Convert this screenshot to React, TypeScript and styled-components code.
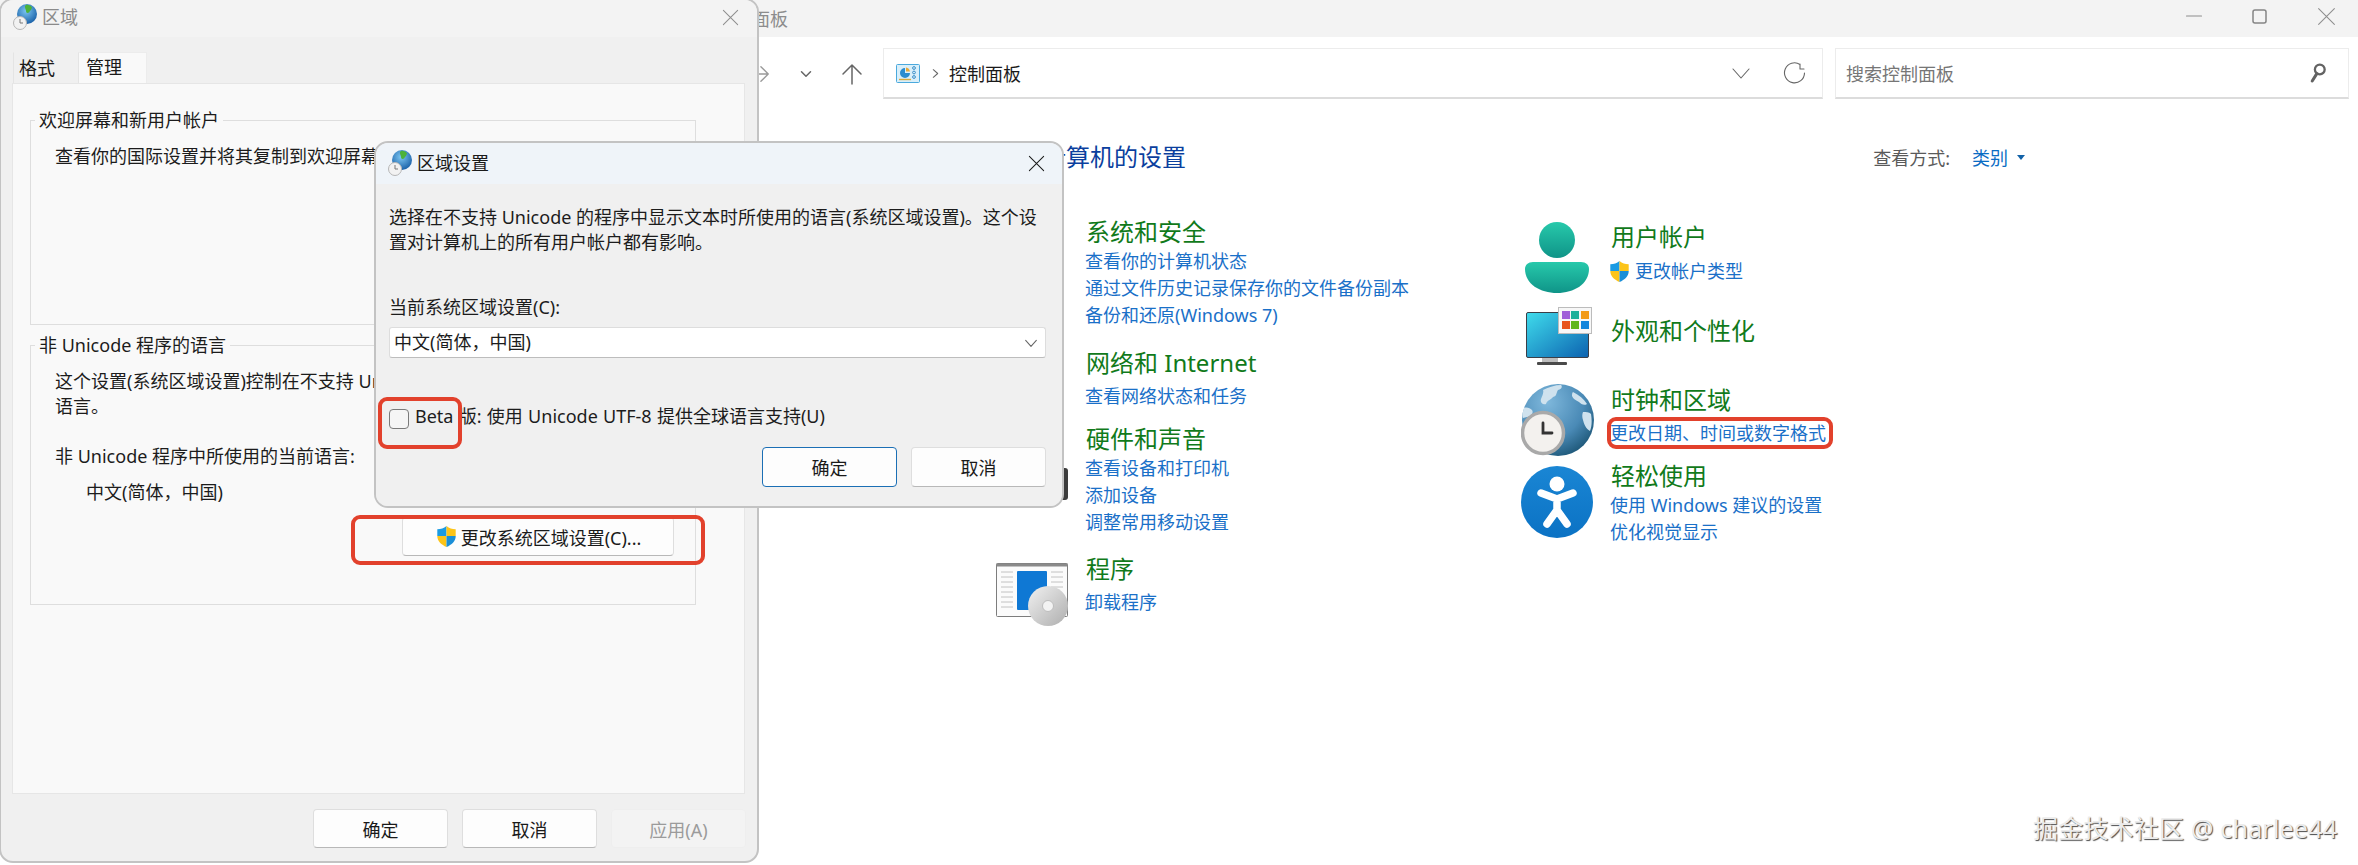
import React from "react";
import styled, { createGlobalStyle } from "styled-components";

const Global = createGlobalStyle`
  html, body { margin: 0; padding: 0; width: 2358px; height: 865px; overflow: hidden; background: #fff; }
  body { font-family: "Noto Sans", "Noto Sans CJK SC", sans-serif; font-size: 18px; color: #1c1c1c; }
  * { box-sizing: border-box; }
`;

const Desktop = styled.div`
  position: relative;
  width: 2358px;
  height: 865px;
  overflow: hidden;
  background: #fff;
`;

/* ---------- main control panel window ---------- */
const MainWindow = styled.section`
  position: absolute;
  left: 0;
  top: 0;
  width: 2358px;
  height: 865px;
  background: #fff;
`;
const MainTitleBar = styled.header`
  height: 37px;
  background: #f3f3f3;
  display: flex;
  align-items: center;
  padding-left: 716px;
  color: #8c8c8c;
  line-height: 34px;
`;
const MainTitleText = styled.span`
  flex: 1;
`;
const WindowControls = styled.div`
  display: flex;
  align-items: center;
  gap: 49px;
  padding: 0 21px 5px 0;
`;
const Toolbar = styled.div`
  display: flex;
  align-items: center;
  padding: 11px 0 0 745px;
  gap: 16px;
`;
const NavButton = styled.span`
  width: 30px;
  height: 51px;
  display: flex;
  align-items: center;
  justify-content: center;
`;
const Field = styled.div<{ $w: number }>`
  width: ${(p) => p.$w}px;
  height: 51px;
  background: #fff;
  border: 1px solid #ececec;
  border-bottom: 2px solid #dcdcdc;
  display: flex;
  align-items: center;
`;
const Address = styled(Field)`
  padding: 0 15px 0 12px;
`;
const Crumb = styled.span`
  color: #1a1a1a;
  margin-left: 7px;
  flex: 1;
`;
const CrumbSep = styled.span`
  margin-left: 9px;
  display: inline-flex;
`;
const AddressActions = styled.div`
  display: flex;
  align-items: center;
  gap: 30px;
`;
const SearchField = styled(Field)`
  margin-left: -4px;
  padding: 0 22px 0 10px;
  justify-content: space-between;
  color: #767676;
`;

const Content = styled.main`
  padding: 42px 0 0 994px;
`;
const HeadingRow = styled.div`
  width: 1031px;
  display: flex;
  justify-content: space-between;
  align-items: center;
  height: 32px;
`;
const Heading = styled.h1`
  margin: 0;
  font-weight: 400;
  font-size: 24px;
  line-height: 32px;
  color: #0b3f9e;
`;
const ViewBy = styled.div`
  display: flex;
  align-items: center;
  color: #5a5a5a;
`;
const ViewValue = styled.span`
  color: #0a6cc4;
  margin-left: 22px;
`;
const ViewCaret = styled.span`
  width: 0;
  height: 0;
  margin-left: 9px;
  border-left: 4px solid transparent;
  border-right: 4px solid transparent;
  border-top: 5px solid #1262a8;
`;
const Columns = styled.div`
  display: grid;
  grid-template-columns: 525px 600px;
  padding: 43px 0 0 2px;
`;
const Column = styled.div`
  display: flex;
  flex-direction: column;
`;
const Category = styled.article<{ $top: number }>`
  display: flex;
  gap: 18px;
  margin-top: ${(p) => p.$top}px;
`;
const IconSlot = styled.div<{ $top: number }>`
  width: 72px;
  flex: none;
  height: 0;
  margin-top: ${(p) => p.$top}px;
  svg { display: block; }
`;
const CategoryBody = styled.div`
  display: flex;
  flex-direction: column;
`;
const CategoryTitle = styled.h2<{ $after: number }>`
  margin: 0 0 ${(p) => p.$after}px;
  font-size: 24px;
  font-weight: 400;
  line-height: 32px;
  color: #117a1b;
  white-space: nowrap;
`;
const TaskLink = styled.a`
  display: flex;
  align-items: center;
  gap: 4px;
  height: 27px;
  line-height: 27px;
  color: #1a70c8;
  white-space: nowrap;
  margin-left: -1px;
`;
const ShieldLink = styled(TaskLink)`
  margin-left: -3px;
`;

/* ---------- dialogs ---------- */
const Dialog = styled.section`
  position: absolute;
  display: flex;
  flex-direction: column;
  background: #f0f0f0;
  border: 2px solid #c3c3c3;
  border-radius: 14px;
  overflow: hidden;
`;
const RegionDialog = styled(Dialog)`
  left: -1px;
  top: -2px;
  width: 760px;
  height: 865px;
`;
const SettingsDialog = styled(Dialog)`
  left: 374px;
  top: 141px;
  width: 690px;
  height: 367px;
`;
const DialogTitle = styled.header<{ $active?: boolean }>`
  flex: none;
  display: flex;
  align-items: center;
  justify-content: space-between;
  background: ${(p) => (p.$active ? "#eff4f9" : "#f3f3f3")};
  color: ${(p) => (p.$active ? "#1a1a1a" : "#8a8a8a")};
`;
const RegionTitle = styled(DialogTitle)`
  height: 37px;
  padding: 0 17px 3px 12px;
`;
const SettingsTitle = styled(DialogTitle)`
  height: 41px;
  padding: 0 16px 1px 12px;
`;
const TitleLabel = styled.div`
  display: flex;
  align-items: center;
  gap: 5px;
  line-height: 34px;
`;
const Tabs = styled.nav`
  display: flex;
  padding: 15px 0 0 12px;
  height: 46px;
`;
const Tab = styled.span<{ $active?: boolean }>`
  width: ${(p) => (p.$active ? 69 : 65)}px;
  padding-left: ${(p) => (p.$active ? 7 : 5)}px;
  line-height: ${(p) => (p.$active ? 28 : 31)}px;
  background: ${(p) => (p.$active ? "#f9f9f9" : "#f0f0f0")};
  color: #1a1a1a;
  border-top: 1px solid ${(p) => (p.$active ? "#ececec" : "transparent")};
  border-left: 1px solid #e4e4e4;
  border-right: 1px solid ${(p) => (p.$active ? "#ececec" : "transparent")};
`;
const TabPanel = styled.div`
  margin: 0 12px 0 11px;
  height: 711px;
  background: #f9f9f9;
  border: 1px solid #e6e6e6;
  padding: 24px 0 0 17px;
  display: flex;
  flex-direction: column;
  gap: 8px;
`;
const Group = styled.fieldset<{ $h: number }>`
  margin: 0;
  width: 666px;
  height: ${(p) => p.$h}px;
  min-width: 0;
  border: 1px solid #dedede;
  padding: 0 20px 0 24px;
  display: flex;
  flex-direction: column;
  color: #1c1c1c;
`;
const Legend = styled.legend`
  margin-left: -20px;
  padding: 0 4px;
  line-height: 24px;
`;
const GroupText = styled.p<{ $top: number; $indent?: number }>`
  margin: ${(p) => p.$top}px 0 0 ${(p) => p.$indent || 0}px;
  line-height: 25px;
`;
const Button = styled.button<{ $primary?: boolean; $disabled?: boolean }>`
  font: inherit;
  color: ${(p) => (p.$disabled ? "#9b9b9b" : "#1a1a1a")};
  background: ${(p) => (p.$disabled ? "#f3f3f3" : "#fdfdfd")};
  border: 1px solid ${(p) => (p.$primary ? "#1b6fb5" : p.$disabled ? "#eeeeee" : "#dedede")};
  border-bottom-color: ${(p) => (p.$primary ? "#1b6fb5" : p.$disabled ? "#eeeeee" : "#b8b8b8")};
  border-radius: 4px;
  padding: 0;
  display: flex;
  align-items: center;
  justify-content: center;
`;
const ActionButton = styled(Button)`
  width: 135px;
  height: 39px;
`;
const AdminButton = styled(Button)`
  width: 272px;
  height: 39px;
  margin: 12px 0 0 347px;
  gap: 3px;
`;
const DialogFooter = styled.footer`
  display: flex;
  justify-content: flex-end;
  gap: 14px;
  padding: 15px 11px 0 0;
`;
const SettingsBody = styled.div`
  flex: 1;
  padding: 21px 16px 0 13px;
  display: flex;
  flex-direction: column;
  background: #f0f0f0;
`;
const BodyText = styled.p<{ $top?: number }>`
  margin: ${(p) => p.$top || 0}px 0 0;
  line-height: 25px;
  white-space: nowrap;
`;
const SelectBox = styled.div`
  margin-top: 7px;
  height: 31px;
  background: #fff;
  border: 1px solid #dddddd;
  border-bottom-color: #bdbdbd;
  border-radius: 3px;
  display: flex;
  align-items: center;
  justify-content: space-between;
  padding: 0 6px 0 4px;
  line-height: 29px;
`;
const CheckRow = styled.label`
  margin-top: 45px;
  display: flex;
  height: 26px;
  line-height: 26px;
  gap: 6px;
  white-space: nowrap;
  word-spacing: 0.6px;
`;
const CheckBox = styled.span`
  flex: none;
  width: 20px;
  height: 20px;
  margin-top: 6px;
  background: #f5f5f5;
  border: 1px solid #7a7a7a;
  border-radius: 4px;
`;
const SettingsActions = styled.div`
  margin-top: 18px;
  display: flex;
  justify-content: flex-end;
  gap: 14px;
`;
const SettingsButton = styled(Button)`
  width: 135px;
  height: 40px;
`;

/* ---------- annotations ---------- */
const Highlight = styled.div<{ $x: number; $y: number; $w: number; $h: number }>`
  position: absolute;
  left: ${(p) => p.$x}px;
  top: ${(p) => p.$y}px;
  width: ${(p) => p.$w}px;
  height: ${(p) => p.$h}px;
  border: 4px solid #e2412c;
  border-radius: 9px;
`;
const Watermark = styled.div`
  position: absolute;
  left: 2033px;
  top: 811px;
  font-size: 25px;
  line-height: 34px;
  letter-spacing: 0.2px;
  color: #ececec;
  white-space: nowrap;
  text-shadow: 1px 1px 1px #4a4a4a, -1px -1px 0 #fff;
`;

/* ---------- drawings ---------- */
const Glyph = ({ d, size, stroke = "#555", w = 1.5 }: { d: string; size: number; stroke?: string; w?: number }) => (
  <svg width={size} height={size} viewBox="0 0 24 24" fill="none" stroke={stroke} strokeWidth={w} strokeLinecap="round" strokeLinejoin="round">
    <path d={d} />
  </svg>
);
const CLOSE = "M3 3 21 21M21 3 3 21";
const CHEVRON = "M4 8 12 17 20 8";

const ShieldIcon = ({ size }: { size: number }) => (
  <svg width={size} height={size} viewBox="0 0 24 25">
    <path fill="#1a9be3" d="M12 1C9 3.5 6 4.5 2 4.5V12H12Z" />
    <path fill="#fcc419" d="M12 1C15 3.5 18 4.5 22 4.5V12H12Z" />
    <path fill="#fcc419" d="M2 12C2 18 6.5 21.5 12 24V12Z" />
    <path fill="#1a8fd8" d="M22 12C22 18 17.5 21.5 12 24V12Z" />
  </svg>
);

const SmallGlobe = () => (
  <svg width="24" height="26" viewBox="0 0 24 26">
    <defs>
      <radialGradient id="sg" cx="0.45" cy="0.35" r="0.7">
        <stop offset="0" stopColor="#7cc6f2" />
        <stop offset="1" stopColor="#135aa3" />
      </radialGradient>
    </defs>
    <circle cx="14" cy="10" r="10" fill="url(#sg)" />
    <path fill="#4cb23a" d="M13 1c2-.5 5 .5 6 2.5-.5 2.5-2 3-3 5-1.5 1-3 .5-3-1.5s-1.5-3-1-5Z" />
    <circle cx="7" cy="19" r="6.5" fill="#f2f2f2" stroke="#b5b5b5" />
    <path d="M7 15v4h3" stroke="#777" strokeWidth="1" fill="none" />
  </svg>
);

const PanelIcon = () => (
  <svg width="24" height="19" viewBox="0 0 24 19">
    <rect x="0.5" y="0.5" width="23" height="18" rx="1" fill="#d9effa" stroke="#4aa9dd" />
    <path d="M9 4a5 5 0 1 0 5 5H9Z" fill="#2b8ccf" />
    <path d="M10 3.5a5 5 0 0 1 4 4h-4Z" fill="#e8a838" />
    <circle cx="18" cy="4" r="1.4" fill="none" stroke="#3a8fc8" />
    <circle cx="18" cy="8.5" r="1.4" fill="none" stroke="#3a8fc8" />
    <circle cx="18" cy="13" r="1.4" fill="none" stroke="#3a8fc8" />
    <path d="M3 15.5h12" stroke="#d8a93c" strokeWidth="1.4" />
  </svg>
);

const PersonIcon = () => (
  <svg width="72" height="74" viewBox="0 0 72 74">
    <defs>
      <linearGradient id="pg" x1="0" y1="0" x2="0" y2="1">
        <stop offset="0" stopColor="#27c9ab" />
        <stop offset="1" stopColor="#0f9488" />
      </linearGradient>
    </defs>
    <circle cx="36" cy="18" r="18" fill="url(#pg)" />
    <path fill="url(#pg)" d="M12 40h48c5 0 8 3 8 7 0 15-15 24-32 24S4 62 4 47c0-4 3-7 8-7Z" />
  </svg>
);

const MonitorIcon = () => (
  <svg width="72" height="60" viewBox="0 0 72 60">
    <defs>
      <linearGradient id="mg" x1="0" y1="0" x2="1" y2="1">
        <stop offset="0" stopColor="#3fdcec" />
        <stop offset="1" stopColor="#0c62b0" />
      </linearGradient>
    </defs>
    <rect x="21" y="49" width="16" height="7" fill="#bdbdbd" />
    <rect x="16" y="55" width="30" height="3" rx="1" fill="#4a4a4a" />
    <rect x="5.5" y="5.5" width="62" height="45" rx="1.5" fill="url(#mg)" stroke="#3a3f48" />
    <rect x="37.5" y="0.5" width="33" height="26" fill="#f7f7f7" stroke="#bcbcbc" />
    <rect x="41" y="4" width="8" height="8" fill="#a060d8" />
    <rect x="50" y="4" width="8" height="8" fill="#1fb09a" />
    <rect x="60" y="4" width="8" height="8" fill="#f29a18" />
    <rect x="41" y="14" width="8" height="8" fill="#e8541c" />
    <rect x="50" y="14" width="8" height="8" fill="#5fb61c" />
    <rect x="60" y="14" width="8" height="8" fill="#1486dc" />
  </svg>
);

const GlobeIcon = () => (
  <svg width="74" height="74" viewBox="0 0 74 74">
    <defs>
      <radialGradient id="gg" cx="0.35" cy="0.25" r="0.85">
        <stop offset="0" stopColor="#7fb8dc" />
        <stop offset="0.6" stopColor="#4a8ab6" />
        <stop offset="1" stopColor="#17506f" />
      </radialGradient>
    </defs>
    <circle cx="37" cy="36" r="36" fill="url(#gg)" />
    <path fill="#cfe2ee" d="M22 6c6-3 12-5 18-5 2 2 0 4-3 5-2 3-1 6-5 7-2 3-6 3-7 7-4 1-6-2-5-5 1-3 3-6 2-9Zm30 2c6 3 11 7 14 12-3 2-6 0-8-2-3-2-6-3-7-6 0-2 0-3 1-4ZM62 28c3 0 6 0 8 2 1 6 1 12-1 17-4-2-6-7-7-11-1-3-1-6 0-8ZM3 24c3-1 6 0 8 2 2 3-1 6-5 7l-4 1c-1-3 0-7 1-10Z" />
    <circle cx="22" cy="49" r="20.5" fill="#f3f1ee" stroke="#a9a9a9" strokeWidth="3.5" />
    <path d="M22 39v10h9" fill="none" stroke="#333" strokeWidth="2.8" strokeLinecap="round" />
  </svg>
);

const EaseIcon = () => (
  <svg width="72" height="72" viewBox="0 0 72 72">
    <defs>
      <linearGradient id="eg" x1="0" y1="0" x2="0" y2="1">
        <stop offset="0" stopColor="#1a86d4" />
        <stop offset="1" stopColor="#0b72c4" />
      </linearGradient>
    </defs>
    <circle cx="36" cy="36" r="36" fill="url(#eg)" />
    <circle cx="36" cy="18" r="7.5" fill="#fff" />
    <path d="M20 27 36 33 52 27M36 33V44M36 44 26 58M36 44 46 58" stroke="#fff" strokeWidth="7.5" fill="none" strokeLinecap="round" strokeLinejoin="round" />
  </svg>
);

const ProgramIcon = () => (
  <svg width="72" height="68" viewBox="0 0 72 68">
    <defs>
      <linearGradient id="dg" x1="0" y1="0" x2="1" y2="1">
        <stop offset="0" stopColor="#f1f1f1" />
        <stop offset="1" stopColor="#aeaeae" />
      </linearGradient>
    </defs>
    <rect x="0.5" y="0.5" width="71" height="53" rx="1" fill="#fbfbfb" stroke="#7d7d7d" />
    <rect x="0.5" y="0.5" width="71" height="3" fill="#8a8a8a" />
    <path d="M5 9h12M5 14h12M5 19h12M5 24h12M5 29h12M5 34h12M5 39h12M5 44h12M55 9h12M55 14h12M55 19h12M55 24h12" stroke="#c2c2c2" />
    <rect x="21" y="8" width="30" height="39" rx="1" fill="#0f78d4" />
    <circle cx="52" cy="43" r="20" fill="url(#dg)" />
    <circle cx="52" cy="43" r="5.5" fill="#f3f3f3" stroke="#bdbdbd" />
  </svg>
);

const DeviceStub = () => (
  <svg width="72" height="32" viewBox="0 0 72 32">
    <rect x="0" y="0" width="72" height="32" rx="3" fill="#3c3c3c" />
  </svg>
);

const App = () => (
  <Desktop lang="zh-CN">
    <Global />
    <MainWindow>
      <MainTitleBar>
        <MainTitleText>控制面板</MainTitleText>
        <WindowControls>
          <Glyph d="M2 12H22" size={18} stroke="#8d8d8d" />
          <svg width="15" height="15" viewBox="0 0 15 15" fill="none" stroke="#858585" strokeWidth="1.5"><rect x="1" y="1" width="13" height="13" rx="2" /></svg>
          <Glyph d={CLOSE} size={21} stroke="#8d8d8d" w={1.2} />
        </WindowControls>
      </MainTitleBar>
      <Toolbar>
        <NavButton><Glyph d="M3 12H21M13 4 21 12 13 20" size={22} stroke="#9a9a9a" /></NavButton>
        <NavButton><Glyph d="M6 9 12 15 18 9" size={18} stroke="#666" w={2} /></NavButton>
        <NavButton><Glyph d="M12 22V3M3 12 12 3 21 12" size={24} stroke="#666" /></NavButton>
        <Address $w={940}>
          <PanelIcon />
          <CrumbSep><Glyph d="M8 5 16 12 8 19" size={13} stroke="#666" w={2} /></CrumbSep>
          <Crumb>控制面板</Crumb>
          <AddressActions>
            <Glyph d={CHEVRON} size={24} stroke="#666" w={1.1} />
            <Glyph d="M17 3.5A10 10 0 1 0 21.5 12M17 3V8H21" size={24} stroke="#666" w={1.1} />
          </AddressActions>
        </Address>
        <SearchField $w={514}>
          <span>搜索控制面板</span>
          <svg width="16" height="22" viewBox="0 0 18 24" fill="none" stroke="#636363">
            <circle cx="11" cy="8" r="5.5" strokeWidth="2.6" />
            <path d="M7.5 13 2.5 21" strokeWidth="3.4" strokeLinecap="round" />
          </svg>
        </SearchField>
      </Toolbar>
      <Content>
        <HeadingRow>
          <Heading>更改计算机的设置</Heading>
          <ViewBy>
            查看方式:
            <ViewValue>类别</ViewValue>
            <ViewCaret />
          </ViewBy>
        </HeadingRow>
        <Columns>
          <Column>
            <Category $top={0}>
              <IconSlot $top={0} />
              <CategoryBody>
                <CategoryTitle $after={0}>系统和安全</CategoryTitle>
                <TaskLink>查看你的计算机状态</TaskLink>
                <TaskLink>通过文件历史记录保存你的文件备份副本</TaskLink>
                <TaskLink>备份和还原(Windows 7)</TaskLink>
              </CategoryBody>
            </Category>
            <Category $top={18}>
              <IconSlot $top={0} />
              <CategoryBody>
                <CategoryTitle $after={4}>网络和 Internet</CategoryTitle>
                <TaskLink>查看网络状态和任务</TaskLink>
              </CategoryBody>
            </Category>
            <Category $top={13}>
              <IconSlot $top={45}><DeviceStub /></IconSlot>
              <CategoryBody>
                <CategoryTitle $after={0}>硬件和声音</CategoryTitle>
                <TaskLink>查看设备和打印机</TaskLink>
                <TaskLink>添加设备</TaskLink>
                <TaskLink>调整常用移动设置</TaskLink>
              </CategoryBody>
            </Category>
            <Category $top={17}>
              <IconSlot $top={10}><ProgramIcon /></IconSlot>
              <CategoryBody>
                <CategoryTitle $after={4}>程序</CategoryTitle>
                <TaskLink>卸载程序</TaskLink>
              </CategoryBody>
            </Category>
          </Column>
          <Column>
            <Category $top={5}>
              <IconSlot $top={1}><PersonIcon /></IconSlot>
              <CategoryBody>
                <CategoryTitle $after={5}>用户帐户</CategoryTitle>
                <ShieldLink><ShieldIcon size={23} />更改帐户类型</ShieldLink>
              </CategoryBody>
            </Category>
            <Category $top={30}>
              <IconSlot $top={-8}><MonitorIcon /></IconSlot>
              <CategoryBody>
                <CategoryTitle $after={0}>外观和个性化</CategoryTitle>
              </CategoryBody>
            </Category>
            <Category $top={37}>
              <IconSlot $top={0}><GlobeIcon /></IconSlot>
              <CategoryBody>
                <CategoryTitle $after={4}>时钟和区域</CategoryTitle>
                <TaskLink>更改日期、时间或数字格式</TaskLink>
              </CategoryBody>
            </Category>
            <Category $top={13}>
              <IconSlot $top={6}><EaseIcon /></IconSlot>
              <CategoryBody>
                <CategoryTitle $after={0}>轻松使用</CategoryTitle>
                <TaskLink>使用 Windows 建议的设置</TaskLink>
                <TaskLink>优化视觉显示</TaskLink>
              </CategoryBody>
            </Category>
          </Column>
        </Columns>
      </Content>
    </MainWindow>

    <RegionDialog>
      <RegionTitle>
        <TitleLabel><SmallGlobe />区域</TitleLabel>
        <Glyph d={CLOSE} size={19} stroke="#8d8d8d" w={1.3} />
      </RegionTitle>
      <Tabs>
        <Tab>格式</Tab>
        <Tab $active>管理</Tab>
      </Tabs>
      <TabPanel>
        <Group $h={217}>
          <Legend>欢迎屏幕和新用户帐户</Legend>
          <GroupText $top={12}>查看你的国际设置并将其复制到欢迎屏幕</GroupText>
        </Group>
        <Group $h={272}>
          <Legend>非 Unicode 程序的语言</Legend>
          <GroupText $top={12}>这个设置(系统区域设置)控制在不支持 Unicode 的程序中显示文本时所使用的<br />语言。</GroupText>
          <GroupText $top={25}>非 Unicode 程序中所使用的当前语言:</GroupText>
          <GroupText $top={11} $indent={31}>中文(简体，中国)</GroupText>
          <AdminButton><ShieldIcon size={23} />更改系统区域设置(C)...</AdminButton>
        </Group>
      </TabPanel>
      <DialogFooter>
        <ActionButton>确定</ActionButton>
        <ActionButton>取消</ActionButton>
        <ActionButton $disabled>应用(A)</ActionButton>
      </DialogFooter>
    </RegionDialog>

    <SettingsDialog>
      <SettingsTitle $active>
        <TitleLabel><SmallGlobe />区域设置</TitleLabel>
        <Glyph d={CLOSE} size={19} stroke="#1a1a1a" w={1.3} />
      </SettingsTitle>
      <SettingsBody>
        <BodyText>选择在不支持 Unicode 的程序中显示文本时所使用的语言(系统区域设置)。这个设</BodyText>
        <BodyText>置对计算机上的所有用户帐户都有影响。</BodyText>
        <BodyText $top={40}>当前系统区域设置(C):</BodyText>
        <SelectBox>
          中文(简体，中国)
          <Glyph d={CHEVRON} size={16} stroke="#666" w={1.6} />
        </SelectBox>
        <CheckRow>
          <CheckBox />
          Beta 版: 使用 Unicode UTF-8 提供全球语言支持(U)
        </CheckRow>
        <SettingsActions>
          <SettingsButton $primary>确定</SettingsButton>
          <SettingsButton>取消</SettingsButton>
        </SettingsActions>
      </SettingsBody>
    </SettingsDialog>

    <Highlight $x={378} $y={397} $w={84} $h={52} />
    <Highlight $x={351} $y={515} $w={354} $h={50} />
    <Highlight $x={1607} $y={417} $w={226} $h={32} />
    <Watermark>掘金技术社区 @ charlee44</Watermark>
  </Desktop>
);

export default App;
